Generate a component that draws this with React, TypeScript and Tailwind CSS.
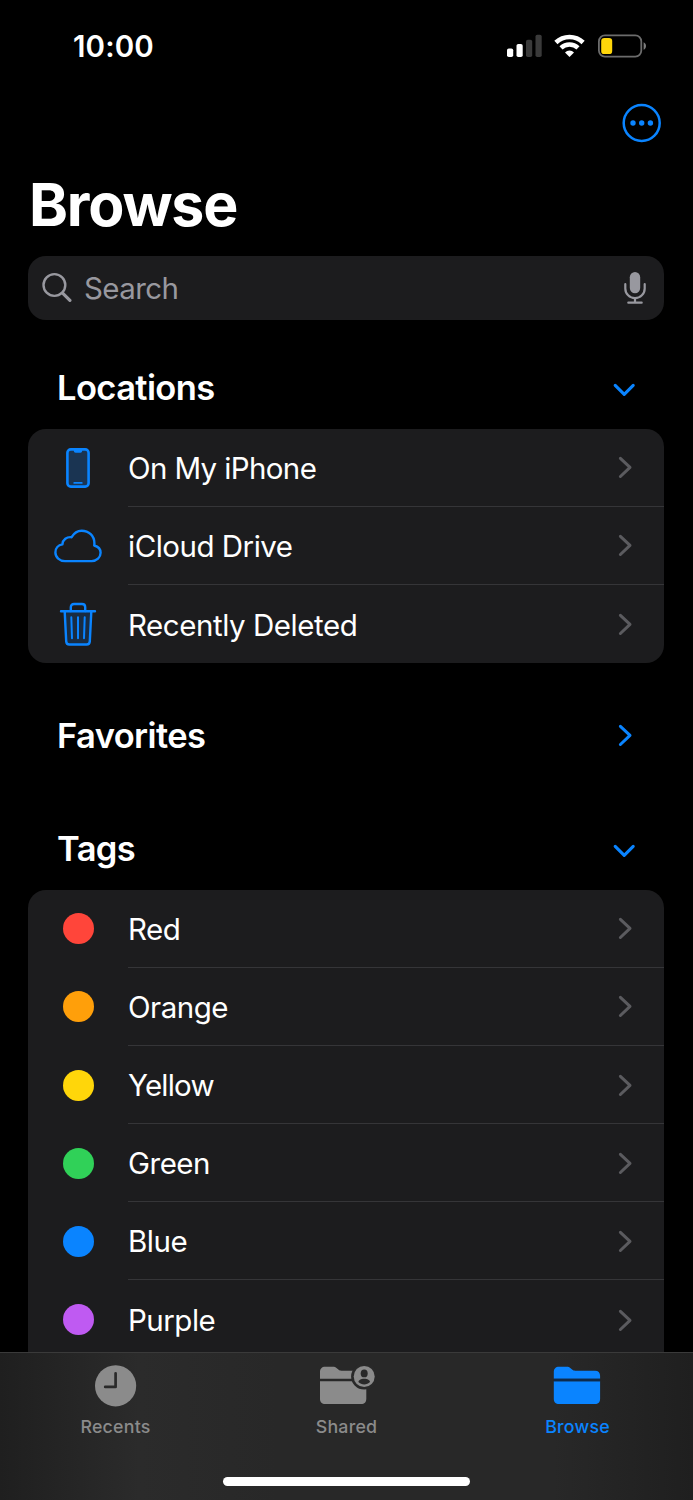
import React from 'react';
import clsx from 'clsx';

// TypeScript interfaces
interface RowItem {
  label: string;
  icon: React.ReactNode;
  className?: string;
}

interface SectionHeaderProps {
  title: string;
  open?: boolean;
  className?: string;
}

interface TabItem {
  label: string;
  icon: React.ReactNode;
  active?: boolean;
}

// Status bar icons
const SignalIcon = () => (
  <svg width="35" height="24" viewBox="0 0 35 24">
    <rect x="0" y="14.5" width="6.2" height="8.6" rx="1.8" fill="#fff" />
    <rect x="9.5" y="10" width="6.2" height="13.1" rx="1.8" fill="#fff" />
    <rect x="19" y="5.7" width="6.2" height="17.4" rx="1.8" fill="#3a3a3a" />
    <rect x="28.5" y="0.8" width="6.2" height="22.3" rx="1.8" fill="#3a3a3a" />
  </svg>
);

const WifiIcon = () => (
  <svg width="31" height="24" viewBox="0 0 31 24" fill="none" stroke="#fff">
    <path d="M1.9 8.5a19.6 19.6 0 0 1 27.2 0" strokeWidth="4.6" />
    <path d="M7 13.9a12.3 12.3 0 0 1 17 0" strokeWidth="4.4" />
    <path d="M15.5 23 11 18.4a6.500 6.500 0 0 1 9 0Z" fill="#fff" stroke="none" />
  </svg>
);

const BatteryIcon = () => (
  <svg width="50" height="24" viewBox="0 0 50 24">
    <rect x="1.9" y="1.4" width="42.4" height="21.2" rx="6" fill="none" stroke="#6c6c6c" strokeWidth="1.8" />
    <rect x="4.2" y="3.9" width="11" height="16.2" rx="3.2" fill="#ffd60a" />
    <path d="M46.6 8.2v7.6c1.5-.7 2.4-2.1 2.4-3.8s-.9-3.1-2.4-3.8Z" fill="#7c7c7c" />
  </svg>
);

const MoreIcon = () => (
  <svg width="40" height="40" viewBox="0 0 40 40">
    <circle cx="19.7" cy="20" r="18" fill="none" stroke="#0a84ff" strokeWidth="2.5" />
    <circle cx="11" cy="20" r="2.7" fill="#0a84ff" />
    <circle cx="19.7" cy="20" r="2.7" fill="#0a84ff" />
    <circle cx="28.4" cy="20" r="2.7" fill="#0a84ff" />
  </svg>
);

// Search field icons
const SearchIcon = () => (
  <svg width="30" height="32" viewBox="0 0 30 32" fill="none" stroke="#98989f" strokeLinecap="round">
    <circle cx="12.4" cy="13" r="10.9" strokeWidth="2.4" />
    <path d="M20.6 21.2 27.9 28.4" strokeWidth="3.2" />
  </svg>
);

const MicIcon = () => (
  <svg width="22" height="34" viewBox="0 0 22 34" fill="none" stroke="#98989f" strokeWidth="2.2" strokeLinecap="round">
    <rect x="5.8" y="1.1" width="10.4" height="21.2" rx="5.2" fill="#98989f" stroke="none" />
    <path d="M1.3 13.2v4.2a9.7 9.7 0 0 0 19.4 0v-4.2" />
    <path d="M11 27.3v4.2M4.3 31.7h13.4" />
  </svg>
);

const ChevronDown = () => (
  <svg width="24" height="24" viewBox="0 0 24 24" fill="none" stroke="#0a84ff" strokeWidth="3.1" strokeLinecap="round" strokeLinejoin="round">
    <path d="M3.2 9.3 12.2 18.4 21.2 9.3" />
  </svg>
);

const ChevronRight = ({ color = '#5b5b5f' }: { color?: string }) => (
  <svg width="24" height="24" viewBox="0 0 24 24" fill="none" stroke={color} strokeWidth="3" strokeLinecap="round" strokeLinejoin="round">
    <path d="M8.4 3.3 18 12.4 8.4 21.5" />
  </svg>
);

// Location icons
const PhoneIcon = () => (
  <svg width="24" height="40" viewBox="0 0 24 40">
    <rect x="1.4" y="1.4" width="21.2" height="37.2" rx="3.4" fill="#1a3452" stroke="#0a84ff" strokeWidth="2.6" />
    <path d="M7.8 2h8.4v1a1.8 1.8 0 0 1-1.8 1.8H9.6A1.8 1.8 0 0 1 7.8 3Z" fill="#0a84ff" />
    <path d="M8.2 34.9h7.6" stroke="#0a84ff" strokeWidth="1.7" strokeLinecap="round" />
  </svg>
);

const CloudIcon = () => (
  <svg width="48" height="34" viewBox="0 0 48 34" fill="none" stroke="#0a84ff" strokeWidth="2.4" strokeLinejoin="round">
    <path d="M11 32.1C5.6 32.1 1.4 28.3 1.4 23.5c0-4.2 2.9-7.4 7-8.1.3-4.7 4.4-7.8 9.2-7.2C20 4.1 23.5 1.7 27.6 1.7c7.3 0 12.8 5.2 12.8 12.5 0 .9-.1 1.7-.2 2.3 3.7 1 6.4 3.7 6.4 7.3 0 4.7-3.9 8.3-8.9 8.3Z" />
  </svg>
);

const TrashIcon = () => (
  <svg width="38" height="44" viewBox="0 0 38 44" fill="none" stroke="#0a84ff" strokeWidth="2.4" strokeLinecap="round" strokeLinejoin="round">
    <path d="M5.7 9.6 7.2 39.4c.1 2 1.3 3.1 3.2 3.1h17.2c1.9 0 3.1-1.1 3.2-3.1L32.3 9.6Z" fill="#192c42" stroke="none" />
    <path d="M2 9.3h34M5.7 9.6 7.2 39.4c.1 2 1.3 3.1 3.2 3.1h17.2c1.9 0 3.1-1.1 3.2-3.1L32.3 9.6" />
    <path d="M11.8 9V5.2c0-2 1.200-3.200 3.200-3.200h8c2 0 3.200 1.200 3.200 3.200V9" />
    <path d="M12.3 15.2 13 36.2M19 15.2v21M25.7 15.2 25 36.2" strokeWidth="2" />
  </svg>
);

const TagDot = ({ className }: { className: string }) => (
  <span className={clsx('size-[31px] rounded-full', className)} />
);

// Tab bar icons
const ClockIcon = () => (
  <svg width="42" height="42" viewBox="0 0 42 42">
    <circle cx="20.6" cy="20.8" r="20.6" fill="#8b8b8b" />
    <path d="M20.6 8.3v13.6H10.2" fill="none" stroke="#2a2a2a" strokeWidth="2.7" strokeLinecap="round" strokeLinejoin="round" />
  </svg>
);

const SharedIcon = () => (
  <svg width="57" height="42" viewBox="0 0 57 42">
    <g fill="#8b8b8b">
      <path d="M2 13.7V7.1C2 3.8 3.9 1.8 7.2 1.8h7.6c1.7 0 2.7.4 4 1.5l1.5 1.2c1 .8 1.8 1.2 3.2 1.2h19.7c3.2 0 5.1 1.9 5.1 5.1v2.9Z" />
      <path d="M2 16.2h46.3v17.6c0 3.3-1.9 5.3-5.2 5.3H7.2C3.9 39.1 2 37.1 2 33.8Z" />
    </g>
    <circle cx="46.2" cy="11.5" r="13.1" fill="#292929" />
    <circle cx="46.2" cy="11.5" r="10.5" fill="#8b8b8b" />
    <ellipse cx="46.2" cy="8.4" rx="3.5" ry="3.9" fill="#292929" />
    <path d="M40.4 17.1c0-2 2.5-3.4 5.8-3.4s5.8 1.4 5.8 3.4c-1.5 1.5-3.6 2.3-5.8 2.3s-4.3-.8-5.8-2.3Z" fill="#292929" />
  </svg>
);

const FolderIcon = () => (
  <svg width="49" height="42" viewBox="0 0 49 42" fill="#0a84ff">
    <path d="M.8 13.7V7.1C.8 3.8 2.7 1.8 6 1.8h7.6c1.7 0 2.7.4 4 1.5l1.5 1.2c1 .8 1.8 1.2 3.2 1.2H42c3.2 0 5.1 1.9 5.1 5.1v2.9Z" />
    <path d="M.8 16.2h46.3v17.6c0 3.3-1.9 5.3-5.2 5.3H6C2.7 39.1.8 37.1.8 33.8Z" />
    <path d="M.8 13.7h46.3v2.5H.8Z" fill="#0d2b4d" />
  </svg>
);

const locations: RowItem[] = [
  { label: 'On My iPhone', icon: <PhoneIcon />, className: 'tracking-[-0.62px]' },
  { label: 'iCloud Drive', icon: <CloudIcon /> },
  { label: 'Recently Deleted', icon: <TrashIcon />, className: 'tracking-[-0.45px]' },
];

const tags: RowItem[] = [
  { label: 'Red', icon: <TagDot className="bg-[#ff453a]" /> },
  { label: 'Orange', icon: <TagDot className="bg-[#ff9f0a]" /> },
  { label: 'Yellow', icon: <TagDot className="bg-[#ffd60a]" />, className: 'tracking-[-0.8px]' },
  { label: 'Green', icon: <TagDot className="bg-[#30d158]" /> },
  { label: 'Blue', icon: <TagDot className="bg-[#0a84ff]" /> },
  { label: 'Purple', icon: <TagDot className="bg-[#bf5af2]" /> },
];

const tabs: TabItem[] = [
  { label: 'Recents', icon: <ClockIcon /> },
  { label: 'Shared', icon: <SharedIcon /> },
  { label: 'Browse', icon: <FolderIcon />, active: true },
];

const SectionHeader: React.FC<SectionHeaderProps> = ({ title, open = false, className }) => (
  <div className={clsx('flex h-[82px] items-center justify-between pr-[28px] pl-[29px]', className)}>
    <h2 className="pt-[2px] text-[34.5px] leading-none font-semibold tracking-[-0.6px]">{title}</h2>
    {open ? <ChevronDown /> : <ChevronRight color="#0a84ff" />}
  </div>
);

const ListCard: React.FC<{ items: RowItem[]; className?: string }> = ({ items, className }) => (
  <ul className={clsx('bg-[#1c1c1e]', className)}>
    {items.map((item, index) => (
      <li key={item.label} className="flex h-[78.2px]">
        <div className="flex w-[100px] items-center justify-center">{item.icon}</div>
        <div
          className={clsx(
            'flex flex-1 items-center justify-between pr-[28px]',
            index < items.length - 1 && 'border-b border-[#353538]'
          )}
        >
          <span className={clsx('pt-[2.6px] text-[29.5px] leading-none', item.className ?? 'tracking-[-0.5px]')}>
            {item.label}
          </span>
          <ChevronRight />
        </div>
      </li>
    ))}
  </ul>
);

const TabBar = () => (
  <nav className="flex h-[148px] flex-col items-center border-t border-[#3a3a3a] bg-[linear-gradient(to_right,#1f1f1f,#2b2b2b_20%,#282828_40%,#282828_80%,#1f1f1f)]">
    <div className="grid w-full flex-1 grid-cols-3 pt-[12px]">
      {tabs.map((tab) => (
        <div
          key={tab.label}
          className={clsx('flex flex-col items-center gap-[11px]', tab.active ? 'text-[#0a84ff]' : 'text-[#8b8b8b]')}
        >
          {tab.icon}
          <span className="text-[17.8px] leading-none font-medium tracking-[0.2px]">{tab.label}</span>
        </div>
      ))}
    </div>
    <div className="mb-[14px] h-[9px] w-[247px] rounded-full bg-white" />
  </nav>
);

export default function App() {
  return (
    <div className="flex h-[1500px] w-[693px] flex-col overflow-hidden bg-black font-['Inter',sans-serif] text-white">
      <header className="flex h-[92px] shrink-0 items-center justify-between pr-[46px] pl-[73px]">
        <span className="pt-[2px] text-[29.5px] leading-none font-semibold tracking-[0.1px]">10:00</span>
        <div className="flex items-center gap-[12px]">
          <SignalIcon />
          <WifiIcon />
          <BatteryIcon />
        </div>
      </header>

      <main className="flex-1 overflow-hidden pr-[29px] pl-[28px]">
        <div className="flex h-[62px] items-center justify-end pr-[2px]">
          <MoreIcon />
        </div>
        <h1 className="flex h-[102px] items-center pb-[2px] pl-px text-[59px] leading-none font-bold tracking-[-1.2px]">
          Browse
        </h1>

        <div className="flex h-[64px] items-center rounded-[18px] bg-[#1c1c1e] pr-[18px] pl-[14px]">
          <SearchIcon />
          <span className="ml-[12px] flex-1 pt-[2px] text-[29.5px] leading-none tracking-[-0.6px] text-[#98989f]">
            Search
          </span>
          <MicIcon />
        </div>

        <SectionHeader title="Locations" open className="mt-[26.6px]" />
        <ListCard items={locations} className="rounded-[18px]" />
        <SectionHeader title="Favorites" className="mt-[31px]" />
        <SectionHeader title="Tags" open className="mt-[31.4px]" />
        <ListCard items={tags} className="rounded-t-[18px]" />
      </main>

      <TabBar />
    </div>
  );
}
